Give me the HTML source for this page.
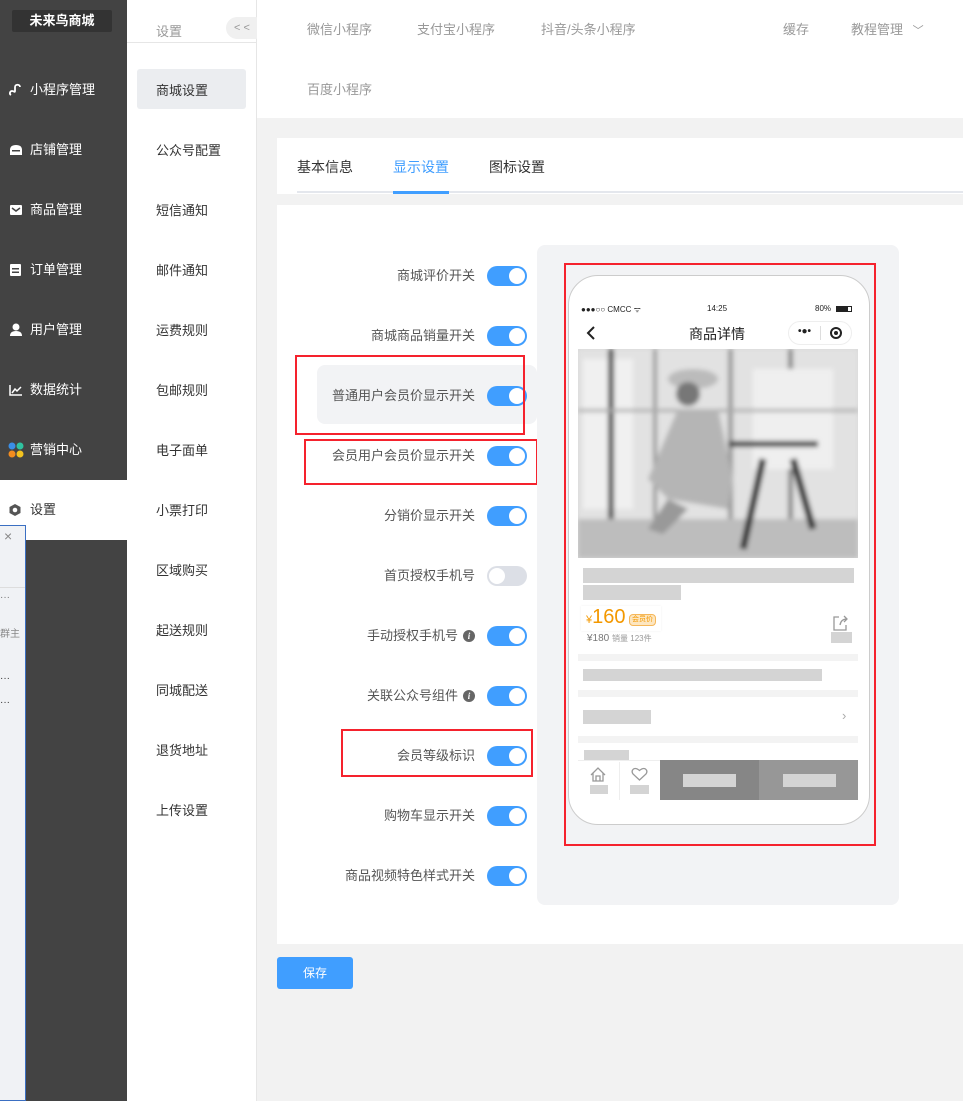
<!DOCTYPE html>
<html><head><meta charset="utf-8">
<style>
*{margin:0;padding:0;box-sizing:border-box}
body{width:963px;height:1101px;position:relative;overflow:hidden;background:#f2f2f2;font-family:"Liberation Sans","Noto Sans CJK SC",sans-serif;font-size:13px;color:#333}
.a{position:absolute}
.side{left:0;top:0;width:127px;height:1101px;background:#434343}
.logo{left:12px;top:10px;width:100px;height:22px;background:#333;color:#fff;font-size:13px;font-weight:bold;text-align:center;line-height:22px;border-radius:2px}
.mi{left:0;width:127px;height:60px;color:#fff;font-size:13px;line-height:60px;padding-left:30px}
.sub{left:127px;top:0;width:130px;height:1101px;background:#fff;border-right:1px solid #e6e6e6}
.si{left:156px;color:#333;font-size:13px}
.top{left:257px;top:0;width:706px;height:118px;background:#fff}
.tn{color:#999;font-size:13px}
.lab{right:488px;font-size:13px;color:#555;text-align:right;white-space:nowrap}
.tg{left:487px;width:40px;height:20px;border-radius:10px;background:#409eff}
.tg::after{content:"";position:absolute;right:2px;top:2px;width:16px;height:16px;border-radius:50%;background:#fff}
.tg.off{background:#dcdfe6}
.tg.off::after{right:auto;left:2px}
.rb{border:2px solid #f5222d}
.info{display:inline-block;width:12px;height:12px;border-radius:50%;background:#666;color:#fff;font-size:9px;font-style:italic;font-weight:bold;text-align:center;line-height:12px;margin-left:5px;vertical-align:1px;font-family:"Liberation Serif",serif}
.gb{background:#d4d4d4}
</style></head><body>
<div class="a side"></div>
<div class="a logo">未来鸟商城</div>
<div class="a mi" style="top:60px"><svg class="a" style="left:9px;top:23px" width="13" height="14" viewBox="0 0 13 14"><path d="M2 12c-2-1-1-4 1-4s3 2 3 0V4c0-3 5-3 5 0" fill="none" stroke="#fff" stroke-width="1.8"/></svg>小程序管理</div>
<div class="a mi" style="top:120px"><svg class="a" style="left:9px;top:24px" width="14" height="12"><path d="M1 6Q1 1 7 1T13 6V11H1Z" fill="#fff"/><rect x="3" y="6" width="8" height="1.5" fill="#434343"/></svg>店铺管理</div>
<div class="a mi" style="top:180px"><svg class="a" style="left:9px;top:24px" width="14" height="12"><rect x="1" y="1" width="12" height="10" rx="1" fill="#fff"/><path d="M3 4l4 3 4-3" stroke="#434343" stroke-width="1.5" fill="none"/></svg>商品管理</div>
<div class="a mi" style="top:240px"><svg class="a" style="left:9px;top:23px" width="13" height="14"><rect x="1" y="1" width="11" height="12" rx="1" fill="#fff"/><rect x="3" y="5" width="7" height="1.5" fill="#434343"/><rect x="3" y="8.5" width="7" height="1.5" fill="#434343"/></svg>订单管理</div>
<div class="a mi" style="top:300px"><svg class="a" style="left:9px;top:23px" width="14" height="13"><circle cx="7" cy="4" r="3.5" fill="#fff"/><path d="M1 13Q1 8 7 8T13 13Z" fill="#fff"/></svg>用户管理</div>
<div class="a mi" style="top:360px"><svg class="a" style="left:9px;top:24px" width="14" height="12"><path d="M1 1V11H13" stroke="#fff" stroke-width="1.5" fill="none"/><path d="M3 9l3-4 2 2 4-4" stroke="#fff" stroke-width="1.5" fill="none"/></svg>数据统计</div>
<div class="a mi" style="top:420px"><svg class="a" style="left:8px;top:22px" width="16" height="16"><circle cx="4" cy="4" r="3.5" fill="#3a8ee6"/><circle cx="12" cy="4" r="3.5" fill="#2fc2a0"/><circle cx="4" cy="12" r="3.5" fill="#f28c1f"/><circle cx="12" cy="12" r="3.5" fill="#f2c21f"/></svg>营销中心</div>
<div class="a mi" style="top:480px;background:#fff;color:#333"><svg class="a" style="left:8px;top:23px" width="14" height="14"><path d="M7 1L12.5 4V10L7 13L1.5 10V4Z" fill="#555"/><circle cx="7" cy="7" r="2.3" fill="#fff"/></svg>设置</div>
<div class="a" style="left:0;top:525px;width:26px;height:576px;background:#f0f2f5;border:1px solid #3b6fc2;border-left:0"></div>
<div class="a" style="left:4px;top:528px;color:#888;font-size:14px">×</div>
<div class="a" style="left:0;top:587px;width:25px;height:1px;background:#ddd"></div>
<div class="a" style="left:0;top:592px;font-size:10px;color:#777">···</div>
<div class="a" style="left:0;top:625px;font-size:10px;color:#888">群主</div>
<div class="a" style="left:0;top:673px;font-size:10px;color:#333">···</div>
<div class="a" style="left:0;top:697px;font-size:10px;color:#333">···</div>

<div class="a sub"></div>
<div class="a" style="left:156px;top:21px;color:#999;font-size:13px">设置</div>
<div class="a" style="left:226px;top:17px;width:40px;height:22px;border-radius:11px;background:#f0f0f0;color:#999;font-size:11px;line-height:22px;padding-left:8px">&lt; &lt;</div>
<div class="a" style="left:127px;top:42px;width:130px;height:1px;background:#e6e6e6"></div>
<div class="a" style="left:137px;top:69px;width:109px;height:40px;background:#ebedf0;border-radius:3px"></div>
<div class="a si" style="top:80px">商城设置</div>
<div class="a si" style="top:140px">公众号配置</div>
<div class="a si" style="top:200px">短信通知</div>
<div class="a si" style="top:260px">邮件通知</div>
<div class="a si" style="top:320px">运费规则</div>
<div class="a si" style="top:380px">包邮规则</div>
<div class="a si" style="top:440px">电子面单</div>
<div class="a si" style="top:500px">小票打印</div>
<div class="a si" style="top:560px">区域购买</div>
<div class="a si" style="top:620px">起送规则</div>
<div class="a si" style="top:680px">同城配送</div>
<div class="a si" style="top:740px">退货地址</div>
<div class="a si" style="top:800px">上传设置</div>

<div class="a top"></div>
<div class="a tn" style="left:307px;top:19px">微信小程序</div>
<div class="a tn" style="left:417px;top:19px">支付宝小程序</div>
<div class="a tn" style="left:541px;top:19px">抖音/头条小程序</div>
<div class="a tn" style="left:783px;top:19px">缓存</div>
<div class="a tn" style="left:851px;top:19px">教程管理 <span style="font-size:11px;margin-left:6px">﹀</span></div>
<div class="a tn" style="left:307px;top:79px">百度小程序</div>

<div class="a" style="left:277px;top:138px;width:686px;height:56px;background:#fff"></div>
<div class="a" style="left:297px;top:157px;font-size:14px">基本信息</div>
<div class="a" style="left:393px;top:157px;font-size:14px;color:#409eff">显示设置</div>
<div class="a" style="left:489px;top:157px;font-size:14px">图标设置</div>
<div class="a" style="left:297px;top:191px;width:666px;height:2px;background:#e4e7ed"></div>
<div class="a" style="left:393px;top:191px;width:56px;height:3px;background:#409eff"></div>

<div class="a" style="left:277px;top:205px;width:686px;height:739px;background:#fff"></div>
<div class="a" style="left:317px;top:365px;width:220px;height:59px;background:#f2f3f5;border-radius:8px"></div>

<div class="a lab" style="top:265px">商城评价开关</div><div class="a tg" style="top:266px"></div>
<div class="a lab" style="top:325px">商城商品销量开关</div><div class="a tg" style="top:326px"></div>
<div class="a lab" style="top:385px">普通用户会员价显示开关</div><div class="a tg" style="top:386px"></div>
<div class="a lab" style="top:445px">会员用户会员价显示开关</div><div class="a tg" style="top:446px"></div>
<div class="a lab" style="top:505px">分销价显示开关</div><div class="a tg" style="top:506px"></div>
<div class="a lab" style="top:565px">首页授权手机号</div><div class="a tg off" style="top:566px"></div>
<div class="a lab" style="top:625px">手动授权手机号<span class="info">i</span></div><div class="a tg" style="top:626px"></div>
<div class="a lab" style="top:685px">关联公众号组件<span class="info">i</span></div><div class="a tg" style="top:686px"></div>
<div class="a lab" style="top:745px">会员等级标识</div><div class="a tg" style="top:746px"></div>
<div class="a lab" style="top:805px">购物车显示开关</div><div class="a tg" style="top:806px"></div>
<div class="a lab" style="top:865px">商品视频特色样式开关</div><div class="a tg" style="top:866px"></div>

<div class="a rb" style="left:295px;top:355px;width:230px;height:80px"></div>
<div class="a rb" style="left:304px;top:439px;width:234px;height:46px"></div>
<div class="a rb" style="left:341px;top:729px;width:192px;height:48px"></div>

<div class="a" style="left:537px;top:245px;width:362px;height:660px;background:#f2f3f5;border-radius:8px"></div>
<div class="a" style="left:568px;top:275px;width:302px;height:550px;background:#fff;border:1px solid #ccc;border-radius:30px"></div>
<div class="a" style="left:581px;top:304px;font-size:8px;color:#222">●●●○○ CMCC ᯤ</div>
<div class="a" style="left:707px;top:304px;font-size:8px;color:#222">14:25</div>
<div class="a" style="left:815px;top:304px;font-size:8px;color:#222">80%</div>
<div class="a" style="left:836px;top:306px;width:16px;height:6px;border:1px solid #222;background:linear-gradient(90deg,#222 80%,#fff 80%)"></div>
<svg class="a" style="left:585px;top:325px" width="12" height="16"><path d="M9 2L3 8l6 6" stroke="#222" stroke-width="2" fill="none"/></svg>
<div class="a" style="left:689px;top:324px;font-size:14px;color:#222">商品详情</div>
<div class="a" style="left:788px;top:321px;width:64px;height:24px;border:1px solid #eee;border-radius:12px"></div>
<div class="a" style="left:798px;top:326px;font-size:10px;font-weight:bold;color:#222">•●•</div>
<div class="a" style="left:820px;top:326px;width:1px;height:14px;background:#ddd"></div>
<div class="a" style="left:830px;top:327px;width:12px;height:12px;border:2px solid #222;border-radius:50%"></div>
<div class="a" style="left:834px;top:331px;width:4px;height:4px;background:#222;border-radius:50%"></div>

<svg class="a" style="left:578px;top:349px" width="280" height="209">
<defs><filter id="b"><feGaussianBlur stdDeviation="2.5"/></filter></defs>
<rect width="280" height="209" fill="#d8d8d8"/>
<g filter="url(#b)">
<rect x="0" y="0" width="280" height="209" fill="#e2e2e2"/>
<rect x="5" y="10" width="50" height="150" fill="#f0f0f0"/>
<rect x="30" y="0" width="6" height="200" fill="#555"/>
<rect x="75" y="0" width="4" height="200" fill="#999"/>
<rect x="150" y="0" width="5" height="190" fill="#999"/>
<rect x="210" y="0" width="5" height="190" fill="#888"/>
<rect x="175" y="20" width="80" height="100" fill="#efefef"/>
<rect x="0" y="60" width="280" height="3" fill="#aaa"/>
<rect x="0" y="170" width="280" height="39" fill="#bdbdbd"/>
<path d="M150 95L240 95" stroke="#444" stroke-width="6"/>
<path d="M185 110L165 200M215 110L235 180" stroke="#333" stroke-width="7"/>
<ellipse cx="115" cy="30" rx="25" ry="10" fill="#bbb"/>
<circle cx="110" cy="45" r="12" fill="#777"/>
<path d="M100 60L140 60L155 130L150 160L90 150L70 130Z" fill="#b5b5b5"/>
<path d="M90 150L70 180L85 185L110 160Z" fill="#999"/>
</g></svg>

<div class="a gb" style="left:583px;top:568px;width:271px;height:15px"></div>
<div class="a gb" style="left:583px;top:585px;width:98px;height:15px"></div>
<div class="a" style="left:581px;top:606px;width:80px;height:25px;background:#fff;box-shadow:0 0 2px #eee"></div>
<div class="a" style="left:586px;top:606px;color:#f39800;font-size:20px"><span style="font-size:11px">¥</span>160</div>
<div class="a" style="left:629px;top:614px;border:1px solid #f5b75a;background:#fde6c0;color:#f39800;font-size:7px;border-radius:4px;padding:0 2px;line-height:10px">会员价</div>
<div class="a" style="left:587px;top:633px;font-size:10px;color:#777">¥180 <span style="font-size:8px;color:#999">销量 123件</span></div>
<svg class="a" style="left:831px;top:614px" width="18" height="18"><path d="M8 3H3V16H15V11M9 11Q10 5 16 5M13 2L16 5L13 8" stroke="#999" stroke-width="1.3" fill="none"/></svg>
<div class="a gb" style="left:831px;top:632px;width:21px;height:11px"></div>
<div class="a" style="left:578px;top:654px;width:280px;height:7px;background:#f3f3f3"></div>
<div class="a gb" style="left:583px;top:669px;width:239px;height:12px"></div>
<div class="a" style="left:578px;top:690px;width:280px;height:7px;background:#f3f3f3"></div>
<div class="a gb" style="left:583px;top:710px;width:68px;height:14px"></div>
<div class="a" style="left:842px;top:708px;color:#aaa;font-size:13px">›</div>
<div class="a" style="left:578px;top:736px;width:280px;height:7px;background:#f3f3f3"></div>
<div class="a gb" style="left:584px;top:750px;width:45px;height:10px"></div>
<div class="a" style="left:578px;top:760px;width:280px;height:1px;background:#eee"></div>
<svg class="a" style="left:590px;top:767px" width="16" height="15"><path d="M1 8L8 1L15 8M3 6V14H13V6M6 14V9H10V14" stroke="#999" stroke-width="1.3" fill="none"/></svg>
<div class="a gb" style="left:590px;top:785px;width:18px;height:9px"></div>
<div class="a" style="left:619px;top:762px;width:1px;height:38px;background:#eee"></div>
<svg class="a" style="left:631px;top:767px" width="17" height="14"><path d="M8.5 13L2 7Q0 4 2.5 2Q5 0.5 8.5 3.5Q12 0.5 14.5 2Q17 4 15 7Z" stroke="#999" stroke-width="1.3" fill="none"/></svg>
<div class="a gb" style="left:630px;top:785px;width:19px;height:9px"></div>
<div class="a" style="left:660px;top:760px;width:99px;height:40px;background:#868686"></div>
<div class="a" style="left:759px;top:760px;width:99px;height:40px;background:#979797"></div>
<div class="a gb" style="left:683px;top:774px;width:53px;height:13px"></div>
<div class="a gb" style="left:783px;top:774px;width:53px;height:13px"></div>
<div class="a rb" style="left:564px;top:263px;width:312px;height:583px"></div>

<div class="a" style="left:277px;top:957px;width:76px;height:32px;background:#409eff;border-radius:3px;color:#fff;font-size:12px;text-align:center;line-height:32px">保存</div>
</body></html>
